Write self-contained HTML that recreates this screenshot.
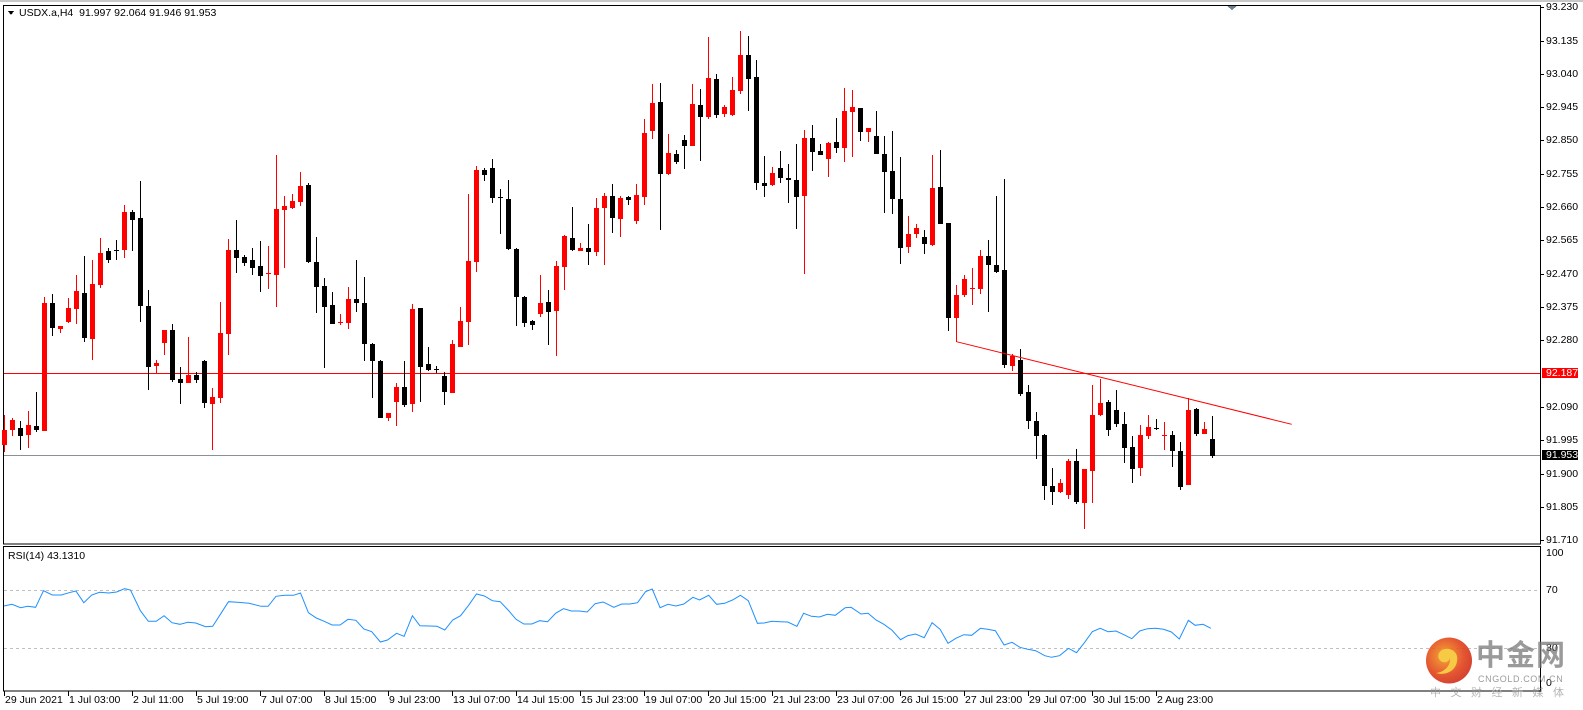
<!DOCTYPE html>
<html><head><meta charset="utf-8"><style>
html,body{margin:0;padding:0;background:#fff;}
body{width:1583px;height:710px;position:relative;overflow:hidden;font-family:"Liberation Sans",Arial,sans-serif;font-size:10.5px;color:#000;}
.t{position:absolute;white-space:nowrap;line-height:12px;}
.p{position:absolute;left:1546px;line-height:11px;font-size:10.5px;}
.d{position:absolute;top:694px;line-height:12px;font-size:10.5px;white-space:nowrap;}
.r{fill:#f00}.b{fill:#000}
</style></head><body>
<svg width="1583" height="710" style="position:absolute;left:0;top:0" shape-rendering="crispEdges">
<rect x="0" y="0" width="1583" height="2" fill="#c8c8c8"/>
<rect x="3.5" y="5.5" width="1537" height="538.5" fill="none" stroke="#000"/>
<rect x="3.5" y="546.5" width="1537" height="144.5" fill="none" stroke="#000"/>
<path d="M1227 6h10l-5 4z" fill="#6b7f8f"/>
<g stroke="#000">
<path d="M1541 7.5h3M1541 41.5h3M1541 74.5h3M1541 107.5h3M1541 140.5h3M1541 174.5h3M1541 207.5h3M1541 240.5h3M1541 274.5h3M1541 307.5h3M1541 340.5h3M1541 407.5h3M1541 440.5h3M1541 474.5h3M1541 507.5h3M1541 540.5h3"/>
<path d="M4.5 691v5M68.5 691v5M132.5 691v5M196.5 691v5M260.5 691v5M324.5 691v5M388.5 691v5M452.5 691v5M516.5 691v5M580.5 691v5M644.5 691v5M708.5 691v5M772.5 691v5M836.5 691v5M900.5 691v5M964.5 691v5M1028.5 691v5M1092.5 691v5M1156.5 691v5"/>
</g>
<rect x="4" y="373" width="1536" height="1" fill="#f00"/>
<rect x="4" y="455" width="1536" height="1" fill="#8a9096"/>
<path d="M4 590.5H1540M4 648.5H1540" stroke="#c0c0c0" stroke-dasharray="3,3"/>
<g>
<rect class="r" x="4" y="415" width="1" height="37"/><rect class="r" x="2" y="430" width="5" height="15"/>
<rect class="r" x="12" y="418" width="1" height="18"/><rect class="r" x="10" y="420" width="5" height="10"/>
<rect class="b" x="20" y="421" width="1" height="29"/><rect class="b" x="18" y="428" width="5" height="8"/>
<rect class="r" x="28" y="411" width="1" height="37"/><rect class="r" x="26" y="425" width="5" height="10"/>
<rect class="b" x="36" y="392" width="1" height="40"/><rect class="b" x="34" y="426" width="5" height="4"/>
<rect class="r" x="44" y="297" width="1" height="134"/><rect class="r" x="42" y="303" width="5" height="128"/>
<rect class="b" x="52" y="294" width="1" height="42"/><rect class="b" x="50" y="303" width="5" height="25"/>
<rect class="r" x="60" y="326" width="1" height="7"/><rect class="r" x="58" y="326" width="5" height="3"/>
<rect class="r" x="68" y="298" width="1" height="25"/><rect class="r" x="66" y="308" width="5" height="14"/>
<rect class="r" x="76" y="275" width="1" height="49"/><rect class="r" x="74" y="291" width="5" height="18"/>
<rect class="b" x="84" y="256" width="1" height="86"/><rect class="b" x="82" y="293" width="5" height="45"/>
<rect class="r" x="92" y="260" width="1" height="100"/><rect class="r" x="90" y="284" width="5" height="55"/>
<rect class="r" x="100" y="238" width="1" height="50"/><rect class="r" x="98" y="253" width="5" height="32"/>
<rect class="b" x="108" y="248" width="1" height="15"/><rect class="b" x="106" y="251" width="5" height="9"/>
<rect class="b" x="116" y="240" width="1" height="20"/><rect class="b" x="114" y="250" width="5" height="1"/>
<rect class="r" x="124" y="205" width="1" height="53"/><rect class="r" x="122" y="212" width="5" height="38"/>
<rect class="b" x="132" y="210" width="1" height="41"/><rect class="b" x="130" y="212" width="5" height="8"/>
<rect class="b" x="140" y="181" width="1" height="141"/><rect class="b" x="138" y="218" width="5" height="88"/>
<rect class="b" x="148" y="290" width="1" height="100"/><rect class="b" x="146" y="306" width="5" height="61"/>
<rect class="r" x="156" y="360" width="1" height="13"/><rect class="r" x="154" y="363" width="5" height="3"/>
<rect class="r" x="164" y="330" width="1" height="25"/><rect class="r" x="162" y="330" width="5" height="13"/>
<rect class="b" x="172" y="324" width="1" height="58"/><rect class="b" x="170" y="330" width="5" height="50"/>
<rect class="b" x="180" y="367" width="1" height="37"/><rect class="b" x="178" y="379" width="5" height="4"/>
<rect class="r" x="188" y="337" width="1" height="46"/><rect class="r" x="186" y="375" width="5" height="8"/>
<rect class="b" x="196" y="372" width="1" height="11"/><rect class="b" x="194" y="375" width="5" height="5"/>
<rect class="b" x="204" y="360" width="1" height="48"/><rect class="b" x="202" y="361" width="5" height="42"/>
<rect class="r" x="212" y="388" width="1" height="62"/><rect class="r" x="210" y="397" width="5" height="7"/>
<rect class="r" x="220" y="302" width="1" height="101"/><rect class="r" x="218" y="333" width="5" height="65"/>
<rect class="r" x="228" y="239" width="1" height="116"/><rect class="r" x="226" y="250" width="5" height="84"/>
<rect class="b" x="236" y="220" width="1" height="53"/><rect class="b" x="234" y="250" width="5" height="8"/>
<rect class="b" x="244" y="255" width="1" height="11"/><rect class="b" x="242" y="257" width="5" height="6"/>
<rect class="b" x="252" y="248" width="1" height="27"/><rect class="b" x="250" y="260" width="5" height="8"/>
<rect class="b" x="260" y="241" width="1" height="51"/><rect class="b" x="258" y="266" width="5" height="10"/>
<rect class="r" x="268" y="246" width="1" height="43"/><rect class="r" x="266" y="273" width="5" height="1"/>
<rect class="r" x="276" y="155" width="1" height="152"/><rect class="r" x="274" y="209" width="5" height="66"/>
<rect class="r" x="284" y="196" width="1" height="72"/><rect class="r" x="282" y="206" width="5" height="4"/>
<rect class="r" x="292" y="194" width="1" height="15"/><rect class="r" x="290" y="201" width="5" height="7"/>
<rect class="r" x="300" y="172" width="1" height="34"/><rect class="r" x="298" y="186" width="5" height="16"/>
<rect class="b" x="308" y="183" width="1" height="80"/><rect class="b" x="306" y="185" width="5" height="77"/>
<rect class="b" x="316" y="237" width="1" height="76"/><rect class="b" x="314" y="262" width="5" height="25"/>
<rect class="b" x="324" y="278" width="1" height="90"/><rect class="b" x="322" y="286" width="5" height="21"/>
<rect class="b" x="332" y="292" width="1" height="32"/><rect class="b" x="330" y="305" width="5" height="19"/>
<rect class="r" x="340" y="314" width="1" height="11"/><rect class="r" x="338" y="322" width="5" height="1"/>
<rect class="r" x="348" y="287" width="1" height="42"/><rect class="r" x="346" y="299" width="5" height="24"/>
<rect class="b" x="356" y="260" width="1" height="52"/><rect class="b" x="354" y="299" width="5" height="4"/>
<rect class="b" x="364" y="277" width="1" height="84"/><rect class="b" x="362" y="303" width="5" height="41"/>
<rect class="b" x="372" y="343" width="1" height="55"/><rect class="b" x="370" y="344" width="5" height="17"/>
<rect class="b" x="380" y="360" width="1" height="58"/><rect class="b" x="378" y="361" width="5" height="57"/>
<rect class="r" x="388" y="413" width="1" height="8"/><rect class="r" x="386" y="413" width="5" height="5"/>
<rect class="r" x="396" y="383" width="1" height="43"/><rect class="r" x="394" y="387" width="5" height="15"/>
<rect class="b" x="404" y="361" width="1" height="46"/><rect class="b" x="402" y="387" width="5" height="18"/>
<rect class="r" x="412" y="304" width="1" height="108"/><rect class="r" x="410" y="309" width="5" height="95"/>
<rect class="b" x="420" y="308" width="1" height="94"/><rect class="b" x="418" y="308" width="5" height="59"/>
<rect class="b" x="428" y="347" width="1" height="24"/><rect class="b" x="426" y="364" width="5" height="6"/>
<rect class="b" x="436" y="366" width="1" height="7"/><rect class="b" x="434" y="369" width="5" height="1"/>
<rect class="b" x="444" y="372" width="1" height="33"/><rect class="b" x="442" y="376" width="5" height="16"/>
<rect class="r" x="452" y="340" width="1" height="53"/><rect class="r" x="450" y="344" width="5" height="49"/>
<rect class="r" x="460" y="307" width="1" height="40"/><rect class="r" x="458" y="321" width="5" height="26"/>
<rect class="r" x="468" y="194" width="1" height="151"/><rect class="r" x="466" y="261" width="5" height="61"/>
<rect class="r" x="476" y="166" width="1" height="106"/><rect class="r" x="474" y="170" width="5" height="92"/>
<rect class="b" x="484" y="168" width="1" height="13"/><rect class="b" x="482" y="170" width="5" height="5"/>
<rect class="b" x="492" y="159" width="1" height="44"/><rect class="b" x="490" y="168" width="5" height="30"/>
<rect class="b" x="500" y="189" width="1" height="45"/><rect class="b" x="498" y="197" width="5" height="1"/>
<rect class="b" x="508" y="180" width="1" height="70"/><rect class="b" x="506" y="199" width="5" height="50"/>
<rect class="b" x="516" y="248" width="1" height="78"/><rect class="b" x="514" y="249" width="5" height="48"/>
<rect class="b" x="524" y="296" width="1" height="31"/><rect class="b" x="522" y="297" width="5" height="26"/>
<rect class="b" x="532" y="320" width="1" height="10"/><rect class="b" x="530" y="321" width="5" height="4"/>
<rect class="r" x="540" y="275" width="1" height="42"/><rect class="r" x="538" y="303" width="5" height="11"/>
<rect class="b" x="548" y="290" width="1" height="55"/><rect class="b" x="546" y="302" width="5" height="10"/>
<rect class="r" x="556" y="261" width="1" height="95"/><rect class="r" x="554" y="266" width="5" height="45"/>
<rect class="r" x="564" y="235" width="1" height="55"/><rect class="r" x="562" y="236" width="5" height="31"/>
<rect class="b" x="572" y="207" width="1" height="44"/><rect class="b" x="570" y="238" width="5" height="12"/>
<rect class="r" x="580" y="243" width="1" height="8"/><rect class="r" x="578" y="248" width="5" height="3"/>
<rect class="b" x="588" y="224" width="1" height="41"/><rect class="b" x="586" y="248" width="5" height="4"/>
<rect class="r" x="596" y="198" width="1" height="58"/><rect class="r" x="594" y="208" width="5" height="44"/>
<rect class="r" x="604" y="193" width="1" height="72"/><rect class="r" x="602" y="196" width="5" height="12"/>
<rect class="b" x="612" y="184" width="1" height="49"/><rect class="b" x="610" y="196" width="5" height="22"/>
<rect class="r" x="620" y="196" width="1" height="41"/><rect class="r" x="618" y="198" width="5" height="21"/>
<rect class="b" x="628" y="196" width="1" height="9"/><rect class="b" x="626" y="197" width="5" height="3"/>
<rect class="r" x="636" y="184" width="1" height="40"/><rect class="r" x="634" y="195" width="5" height="26"/>
<rect class="r" x="644" y="119" width="1" height="86"/><rect class="r" x="642" y="133" width="5" height="64"/>
<rect class="r" x="652" y="84" width="1" height="55"/><rect class="r" x="650" y="103" width="5" height="28"/>
<rect class="b" x="660" y="83" width="1" height="147"/><rect class="b" x="658" y="102" width="5" height="72"/>
<rect class="r" x="668" y="134" width="1" height="41"/><rect class="r" x="666" y="153" width="5" height="21"/>
<rect class="b" x="676" y="150" width="1" height="14"/><rect class="b" x="674" y="154" width="5" height="8"/>
<rect class="b" x="684" y="135" width="1" height="34"/><rect class="b" x="682" y="140" width="5" height="6"/>
<rect class="r" x="692" y="84" width="1" height="62"/><rect class="r" x="690" y="104" width="5" height="42"/>
<rect class="b" x="700" y="89" width="1" height="72"/><rect class="b" x="698" y="105" width="5" height="12"/>
<rect class="r" x="708" y="37" width="1" height="82"/><rect class="r" x="706" y="78" width="5" height="39"/>
<rect class="b" x="716" y="74" width="1" height="44"/><rect class="b" x="714" y="79" width="5" height="36"/>
<rect class="r" x="724" y="105" width="1" height="12"/><rect class="r" x="722" y="107" width="5" height="7"/>
<rect class="r" x="732" y="77" width="1" height="39"/><rect class="r" x="730" y="90" width="5" height="25"/>
<rect class="r" x="740" y="31" width="1" height="63"/><rect class="r" x="738" y="55" width="5" height="36"/>
<rect class="b" x="748" y="36" width="1" height="75"/><rect class="b" x="746" y="55" width="5" height="24"/>
<rect class="b" x="756" y="60" width="1" height="130"/><rect class="b" x="754" y="77" width="5" height="106"/>
<rect class="b" x="764" y="156" width="1" height="41"/><rect class="b" x="762" y="183" width="5" height="3"/>
<rect class="r" x="772" y="167" width="1" height="19"/><rect class="r" x="770" y="173" width="5" height="12"/>
<rect class="b" x="780" y="151" width="1" height="32"/><rect class="b" x="778" y="168" width="5" height="10"/>
<rect class="b" x="788" y="164" width="1" height="39"/><rect class="b" x="786" y="178" width="5" height="2"/>
<rect class="b" x="796" y="144" width="1" height="85"/><rect class="b" x="794" y="180" width="5" height="17"/>
<rect class="r" x="804" y="130" width="1" height="144"/><rect class="r" x="802" y="138" width="5" height="58"/>
<rect class="b" x="812" y="125" width="1" height="46"/><rect class="b" x="810" y="138" width="5" height="14"/>
<rect class="b" x="820" y="144" width="1" height="11"/><rect class="b" x="818" y="151" width="5" height="4"/>
<rect class="r" x="828" y="142" width="1" height="35"/><rect class="r" x="826" y="143" width="5" height="16"/>
<rect class="b" x="836" y="118" width="1" height="35"/><rect class="b" x="834" y="142" width="5" height="6"/>
<rect class="r" x="844" y="88" width="1" height="74"/><rect class="r" x="842" y="111" width="5" height="37"/>
<rect class="r" x="852" y="90" width="1" height="67"/><rect class="r" x="850" y="107" width="5" height="5"/>
<rect class="b" x="860" y="108" width="1" height="33"/><rect class="b" x="858" y="108" width="5" height="24"/>
<rect class="r" x="868" y="128" width="1" height="14"/><rect class="r" x="866" y="128" width="5" height="4"/>
<rect class="b" x="876" y="111" width="1" height="43"/><rect class="b" x="874" y="136" width="5" height="18"/>
<rect class="b" x="884" y="136" width="1" height="77"/><rect class="b" x="882" y="154" width="5" height="18"/>
<rect class="b" x="892" y="131" width="1" height="83"/><rect class="b" x="890" y="171" width="5" height="28"/>
<rect class="b" x="900" y="157" width="1" height="107"/><rect class="b" x="898" y="199" width="5" height="49"/>
<rect class="r" x="908" y="216" width="1" height="37"/><rect class="r" x="906" y="234" width="5" height="13"/>
<rect class="r" x="916" y="224" width="1" height="14"/><rect class="r" x="914" y="228" width="5" height="6"/>
<rect class="b" x="924" y="230" width="1" height="24"/><rect class="b" x="922" y="237" width="5" height="7"/>
<rect class="r" x="932" y="155" width="1" height="91"/><rect class="r" x="930" y="188" width="5" height="57"/>
<rect class="b" x="940" y="150" width="1" height="74"/><rect class="b" x="938" y="187" width="5" height="37"/>
<rect class="b" x="948" y="223" width="1" height="108"/><rect class="b" x="946" y="223" width="5" height="95"/>
<rect class="r" x="956" y="285" width="1" height="57"/><rect class="r" x="954" y="295" width="5" height="23"/>
<rect class="r" x="964" y="275" width="1" height="22"/><rect class="r" x="962" y="279" width="5" height="16"/>
<rect class="r" x="972" y="268" width="1" height="37"/><rect class="r" x="970" y="288" width="5" height="1"/>
<rect class="r" x="980" y="250" width="1" height="44"/><rect class="r" x="978" y="256" width="5" height="33"/>
<rect class="b" x="988" y="240" width="1" height="72"/><rect class="b" x="986" y="256" width="5" height="9"/>
<rect class="b" x="996" y="196" width="1" height="77"/><rect class="b" x="994" y="265" width="5" height="7"/>
<rect class="b" x="1004" y="179" width="1" height="189"/><rect class="b" x="1002" y="270" width="5" height="95"/>
<rect class="r" x="1012" y="354" width="1" height="17"/><rect class="r" x="1010" y="356" width="5" height="10"/>
<rect class="b" x="1020" y="349" width="1" height="47"/><rect class="b" x="1018" y="360" width="5" height="34"/>
<rect class="b" x="1028" y="385" width="1" height="44"/><rect class="b" x="1026" y="392" width="5" height="29"/>
<rect class="b" x="1036" y="412" width="1" height="47"/><rect class="b" x="1034" y="421" width="5" height="15"/>
<rect class="b" x="1044" y="434" width="1" height="66"/><rect class="b" x="1042" y="435" width="5" height="51"/>
<rect class="b" x="1052" y="468" width="1" height="37"/><rect class="b" x="1050" y="486" width="5" height="6"/>
<rect class="r" x="1060" y="479" width="1" height="14"/><rect class="r" x="1058" y="483" width="5" height="9"/>
<rect class="r" x="1068" y="459" width="1" height="40"/><rect class="r" x="1066" y="461" width="5" height="34"/>
<rect class="b" x="1076" y="449" width="1" height="55"/><rect class="b" x="1074" y="461" width="5" height="41"/>
<rect class="r" x="1084" y="469" width="1" height="60"/><rect class="r" x="1082" y="469" width="5" height="34"/>
<rect class="r" x="1092" y="385" width="1" height="118"/><rect class="r" x="1090" y="415" width="5" height="56"/>
<rect class="r" x="1100" y="379" width="1" height="37"/><rect class="r" x="1098" y="403" width="5" height="12"/>
<rect class="b" x="1108" y="400" width="1" height="36"/><rect class="b" x="1106" y="402" width="5" height="28"/>
<rect class="b" x="1116" y="390" width="1" height="37"/><rect class="b" x="1114" y="410" width="5" height="14"/>
<rect class="b" x="1124" y="412" width="1" height="51"/><rect class="b" x="1122" y="424" width="5" height="24"/>
<rect class="b" x="1132" y="436" width="1" height="47"/><rect class="b" x="1130" y="447" width="5" height="22"/>
<rect class="r" x="1140" y="425" width="1" height="51"/><rect class="r" x="1138" y="435" width="5" height="33"/>
<rect class="r" x="1148" y="415" width="1" height="24"/><rect class="r" x="1146" y="427" width="5" height="9"/>
<rect class="b" x="1156" y="419" width="1" height="11"/><rect class="b" x="1154" y="428" width="5" height="1"/>
<rect class="r" x="1164" y="422" width="1" height="28"/><rect class="r" x="1162" y="435" width="5" height="1"/>
<rect class="b" x="1172" y="431" width="1" height="36"/><rect class="b" x="1170" y="435" width="5" height="16"/>
<rect class="b" x="1180" y="442" width="1" height="48"/><rect class="b" x="1178" y="451" width="5" height="36"/>
<rect class="r" x="1188" y="398" width="1" height="87"/><rect class="r" x="1186" y="410" width="5" height="75"/>
<rect class="b" x="1196" y="408" width="1" height="28"/><rect class="b" x="1194" y="409" width="5" height="25"/>
<rect class="r" x="1204" y="422" width="1" height="12"/><rect class="r" x="1202" y="429" width="5" height="5"/>
<rect class="b" x="1212" y="416" width="1" height="42"/><rect class="b" x="1210" y="439" width="5" height="17"/>
</g>
<line x1="956.5" y1="341.7" x2="1291.7" y2="424.3" stroke="#f00" stroke-width="1" shape-rendering="auto"/>
<rect x="1542" y="368" width="36" height="10" fill="#f00"/>
<rect x="1542" y="450" width="36" height="10" fill="#000"/>
<polyline shape-rendering="auto" fill="none" stroke="#1e90ff" stroke-width="1" points="4,606 12,604.3 20.6,607.7 27.7,606.3 35.6,607.3 43.5,590.7 52.2,595 61.3,595 69.2,592.7 75.9,591 83.8,602.7 91.7,595 99.6,592.3 108.7,593 116.6,592 124.6,588.7 130.5,590 140.4,610.7 148.3,621.3 156.2,621.3 164.1,615.7 172,622.7 179.9,624.3 187.8,622.3 195.7,623 205.6,626.7 212.7,626.3 228.5,601.7 237.2,602.3 249.1,603.3 261,606.3 268.1,606.3 276,596.3 284.7,595.3 293.4,595.3 300.5,593 308.4,612.7 316.3,618 324.2,621.3 332.1,625 340.1,625 348,619.3 355.9,620.3 363.8,629 371.7,631.7 380.4,642 387.5,640 396.6,633.3 404.1,636.3 412.4,615.7 419.9,625.7 429,626 436.9,626.3 444.8,630 452.7,620 460.6,615.7 468.6,605.3 476.5,594 484.4,596 492.3,600.7 500.2,601.7 508.1,610 516,619.3 523.9,624 531.8,624 539.7,620.7 547.6,621.7 555.6,613.3 563.5,608.7 571.4,611 579.3,611 587.2,612 595.1,603.7 603,602 605.9,603.3 613.8,607.3 621.7,604 629.7,604 637.6,602.7 645.5,591.7 652.2,589 660.1,607.7 668,604.3 675.9,606 683.8,604 692.9,597.3 699.6,600 708.7,595.3 716.6,604.3 724.6,603.3 732.5,600 740.4,595.3 748.3,600.7 757.4,623.3 764.1,623 772,621.3 779.9,621.7 787.8,622 796.9,626.3 803.6,613.3 811.5,616.3 819.5,617 827.4,614.3 835.3,615.3 845.2,607.7 851.1,607.3 861,614 868.1,613.3 876,620 883.9,624.3 891.8,630 900.5,639.7 907.6,635.7 915.5,634 924.2,637.7 932.1,622.7 940.1,629.3 948,643.3 955.9,638.3 963.8,634.7 971.7,635.3 980.4,628.3 987.5,629.3 995.4,630.7 1004.1,645 1012,642.3 1019.9,647.3 1027.8,649.3 1035.7,650.7 1044.8,655.7 1051.6,657.3 1059.5,655.7 1068.6,648.3 1076.5,652.7 1084.4,642.7 1092.3,631.7 1100.2,628.3 1108.1,631.7 1116,631 1123.9,634.7 1131.8,638.7 1139.7,631 1147.6,628.7 1155.6,628.3 1163.5,629.3 1171.4,632 1179.3,639 1188.4,620.3 1195.1,625.3 1203,624.3 1210.9,628.3"/>
<path d="M8 11h6l-3 4z" fill="#000"/>
<defs><radialGradient id="lg" cx="40%" cy="40%" r="70%"><stop offset="0" stop-color="#f4a021"/><stop offset="0.6" stop-color="#e2441c"/><stop offset="1" stop-color="#c9281a"/></radialGradient></defs>
<g opacity="0.9" shape-rendering="auto">
<circle cx="1449" cy="660.5" r="23" fill="url(#lg)"/>
<path d="M1452 650c-8-4-16 2-13 9 3 5 10 4 11-1 1 7-5 14-14 15 9 3 20-2 21-12 1-5-1-9-5-11z" fill="#f7c533"/>
</g>
</svg>
<div class="t" style="left:19px;top:7px;">USDX.a,H4&nbsp; 91.997 92.064 91.946 91.953</div>
<div class="t" style="left:8px;top:550px;">RSI(14) 43.1310</div>
<div class="p" style="top:2px">93.230</div>
<div class="p" style="top:36px">93.135</div>
<div class="p" style="top:69px">93.040</div>
<div class="p" style="top:102px">92.945</div>
<div class="p" style="top:135px">92.850</div>
<div class="p" style="top:169px">92.755</div>
<div class="p" style="top:202px">92.660</div>
<div class="p" style="top:235px">92.565</div>
<div class="p" style="top:269px">92.470</div>
<div class="p" style="top:302px">92.375</div>
<div class="p" style="top:335px">92.280</div>
<div class="p" style="top:368px;color:#fff">92.187</div>
<div class="p" style="top:402px">92.090</div>
<div class="p" style="top:435px">91.995</div>
<div class="p" style="top:450px;color:#fff">91.953</div>
<div class="p" style="top:469px">91.900</div>
<div class="p" style="top:502px">91.805</div>
<div class="p" style="top:535px">91.710</div>
<div class="p" style="top:548px">100</div>
<div class="p" style="top:585px">70</div>
<div class="p" style="top:643px">30</div>
<div class="p" style="top:678px">0</div>
<div class="d" style="left:5px">29 Jun 2021</div>
<div class="d" style="left:69px">1 Jul 03:00</div>
<div class="d" style="left:133px">2 Jul 11:00</div>
<div class="d" style="left:197px">5 Jul 19:00</div>
<div class="d" style="left:261px">7 Jul 07:00</div>
<div class="d" style="left:325px">8 Jul 15:00</div>
<div class="d" style="left:389px">9 Jul 23:00</div>
<div class="d" style="left:453px">13 Jul 07:00</div>
<div class="d" style="left:517px">14 Jul 15:00</div>
<div class="d" style="left:581px">15 Jul 23:00</div>
<div class="d" style="left:645px">19 Jul 07:00</div>
<div class="d" style="left:709px">20 Jul 15:00</div>
<div class="d" style="left:773px">21 Jul 23:00</div>
<div class="d" style="left:837px">23 Jul 07:00</div>
<div class="d" style="left:901px">26 Jul 15:00</div>
<div class="d" style="left:965px">27 Jul 23:00</div>
<div class="d" style="left:1029px">29 Jul 07:00</div>
<div class="d" style="left:1093px">30 Jul 15:00</div>
<div class="d" style="left:1157px">2 Aug 23:00</div>
<div class="t" style="left:1476px;top:636px;font-family:'Noto Sans CJK SC','WenQuanYi Zen Hei',sans-serif;font-size:29px;line-height:34px;font-weight:bold;color:rgba(120,120,120,0.75);letter-spacing:1px;">中金网</div>
<div class="t" style="left:1478px;top:674px;font-size:9px;line-height:10px;color:rgba(130,130,130,0.8);letter-spacing:0.6px;">CNGOLD.COM.CN</div>
<div class="t" style="left:1430px;top:686px;font-family:'Noto Sans CJK SC','WenQuanYi Zen Hei',sans-serif;font-size:11px;line-height:13px;color:rgba(150,150,150,0.7);letter-spacing:9.5px;">中文财经新媒体</div>
</body></html>
